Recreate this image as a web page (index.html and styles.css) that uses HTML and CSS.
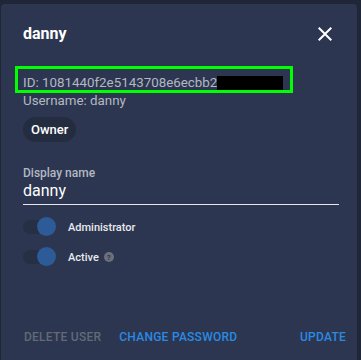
FILE: index.html
```html
<!DOCTYPE html>
<html>
<head>
<meta charset="utf-8">
<link rel="stylesheet" href="styles.css">
</head>
<body>
<div class="dialog">
  <div class="header">
    <div class="title">danny</div>
    <svg class="close" viewBox="0 0 24 24" width="24" height="24"><path fill="#ffffff" d="M19 6.41L17.59 5 12 10.59 6.41 5 5 6.41 10.59 12 5 17.59 6.41 19 12 13.41 17.59 19 19 17.59 13.41 12z"/></svg>
  </div>
  <div class="body">
    <div class="idline">ID: 1081440f2e5143708e6ecbb2<span class="redact"></span><span class="highlight"></span></div>
    <div class="meta">Username: danny</div>
    <div class="chip">Owner</div>
    <div class="field">
      <div class="label">Display name</div>
      <div class="value">danny</div>
    </div>
    <div class="switchrow">
      <div class="switch"><div class="track"></div><div class="thumb"></div></div>
      <span class="swlabel">Administrator</span>
    </div>
    <div class="switchrow">
      <div class="switch"><div class="track"></div><div class="thumb"></div></div>
      <span class="swlabel">Active</span>
      <span class="help">?</span>
    </div>
  </div>
  <div class="actions">
    <div class="left">
      <span class="btn disabled">Delete user</span>
      <span class="btn">Change password</span>
    </div>
    <span class="btn">Update</span>
  </div>
</div>
</body>
</html>
```
FILE: styles.css
```css
html, body {
  margin: 0;
  padding: 0;
  background: #1f2638;
  font-family: Roboto, "Liberation Sans", sans-serif;
  overflow: hidden;
}
.dialog {
  margin: 4px 0 0 1px;
  width: 356px;
  height: 370px;
  background: #2c3650;
  border-radius: 4px;
  display: flex;
  flex-direction: column;
  box-sizing: border-box;
}
.header {
  display: flex;
  justify-content: space-between;
  align-items: flex-start;
  padding: 18px 20px 0 22px;
  height: 70px;
  box-sizing: border-box;
}
.title {
  font-size: 16px;
  font-weight: 700;
  line-height: 24px;
  color: #ffffff;
}
.close {
  display: block;
}
.body {
  padding: 0 18px 0 22px;
}
.idline {
  position: relative;
  font-size: 13.35px;
  line-height: 18px;
  color: #b3b8c2;
  display: flex;
  align-items: center;
}
.redact {
  display: inline-block;
  width: 66px;
  height: 14px;
  background: #000000;
}
.highlight {
  position: absolute;
  left: -8px;
  top: -8px;
  width: 278px;
  height: 27px;
  border: 3px solid #00ff00;
  box-sizing: border-box;
}
.meta {
  font-size: 13.35px;
  line-height: 18px;
  color: #b3b8c2;
}
.chip {
  display: inline-block;
  margin-top: 7px;
  height: 25px;
  line-height: 25px;
  padding: 0 8px;
  border-radius: 13px;
  background: #242c3f;
  color: #ffffff;
  font-size: 13px;
  font-weight: 500;
}
.field {
  margin-top: 24px;
  border-bottom: 1px solid #e6e8ec;
  padding-bottom: 3px;
}
.label {
  font-size: 12px;
  line-height: 15px;
  color: #b3b8c2;
  font-weight: 500;
}
.value {
  font-size: 16px;
  line-height: 20px;
  color: #ffffff;
}
.switchrow {
  display: flex;
  align-items: center;
  height: 30px;
}
.field + .switchrow {
  margin-top: 7px;
}
.switch {
  position: relative;
  width: 34px;
  height: 20px;
  margin-right: 11px;
}
.track {
  position: absolute;
  left: 0;
  top: 3px;
  width: 32px;
  height: 14px;
  border-radius: 7px;
  background: #262f44;
}
.thumb {
  position: absolute;
  left: 14px;
  top: 0;
  width: 19px;
  height: 19px;
  border-radius: 50%;
  background: #2c5b97;
}
.swlabel {
  font-size: 11px;
  font-weight: 500;
  color: #e8eaee;
}
.help {
  display: inline-flex;
  align-items: center;
  justify-content: center;
  width: 10px;
  height: 10px;
  border-radius: 50%;
  background: #6c707a;
  color: #2c3650;
  font-size: 8px;
  font-weight: 700;
  margin-left: 5px;
}
.actions {
  margin-top: 57px;
  display: flex;
  justify-content: space-between;
  padding: 0 11px 0 23px;
}
.left {
  display: flex;
  gap: 18px;
}
.btn {
  font-size: 12px;
  line-height: 16px;
  font-weight: 500;
  letter-spacing: 0.25px;
  text-transform: uppercase;
  color: #2a8ae3;
}
.btn.disabled {
  color: #626a78;
}
```
